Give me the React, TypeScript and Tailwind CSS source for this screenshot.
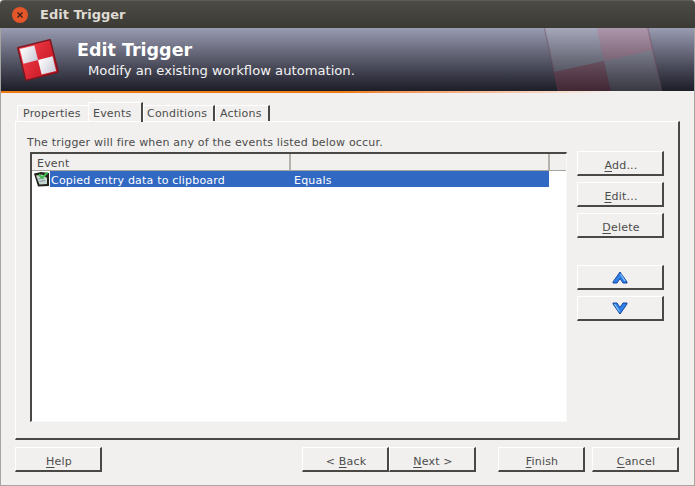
const font = "[font-family:'DejaVu_Sans',sans-serif]";

function Logo() {
  return (
    <svg width="44" height="44" viewBox="0 0 44 44" className="shrink-0">
      <defs>
        <linearGradient id="red" x1="0" y1="0" x2="1" y2="1">
          <stop offset="0" stopColor="#f4444f" />
          <stop offset="1" stopColor="#c20f1d" />
        </linearGradient>
        <linearGradient id="pale" x1="0" y1="0" x2="1" y2="1">
          <stop offset="0" stopColor="#ffffff" />
          <stop offset="1" stopColor="#c9c9d6" />
        </linearGradient>
      </defs>
      <g transform="translate(22 22) rotate(-14)">
        <rect x="-17.5" y="-17.5" width="35" height="35" rx="1" fill="#7c1620" />
        <rect x="-16" y="-16" width="32" height="32" fill="url(#red)" />
        <rect x="-15" y="-15" width="15" height="15" fill="url(#pale)" />
        <rect x="0" y="0" width="15" height="15" fill="url(#pale)" />
      </g>
    </svg>
  );
}

function Watermark() {
  return (
    <svg width="130" height="63" viewBox="0 0 130 63" className="absolute left-[540px] top-0">
      <g transform="translate(63 33) rotate(-12.5)">
        <rect x="-51" y="-60" width="51" height="60" fill="#ffffff" opacity="0.12" />
        <rect x="0" y="-60" width="50" height="60" fill="#e08a9a" opacity="0.28" />
        <rect x="-51" y="0" width="51" height="60" fill="#a84250" opacity="0.26" />
        <rect x="0" y="0" width="50" height="60" fill="#ffffff" opacity="0.12" />
        <path d="M-51 -60 V60 M50 -60 V60" stroke="#6d4255" strokeWidth="1.5" opacity="0.35" />
      </g>
    </svg>
  );
}

function Btn({ children, className = '' }: { children: React.ReactNode; className?: string }) {
  return (
    <div
      className={`flex h-[25px] w-[87px] shrink-0 items-center justify-center border-t border-l border-t-white border-l-white border-r-2 border-b-2 border-r-[#4a4844] border-b-[#4a4844] text-[11px] text-[#4c4c4c] ${className}`}
    >
      {children}
    </div>
  );
}

function Label({ mark, rest, before = '' }: { mark: string; rest: string; before?: string }) {
  return (
    <span className="whitespace-pre pt-[7px] pl-[2px] tracking-[0.2px]">
      {before}
      <span className="underline underline-offset-2">{mark}</span>
      {rest}
    </span>
  );
}

function Tab({
  label,
  className,
  active,
}: {
  label: string;
  className: string;
  active?: boolean;
}) {
  return (
    <div
      className={`flex items-center border-t border-l border-t-white border-l-white text-[11px] tracking-[0.2px] text-[#4c4c4c] ${className} ${
        active ? 'relative z-10 -mb-px h-[20px] pt-[3px]' : 'h-[16px] pt-[1px]'
      }`}
    >
      {label}
    </div>
  );
}

function Up() {
  return (
    <svg width="16" height="13" viewBox="0 0 16 13">
      <path d="M8 1 L15 11 L15 12 L11 12 L8 7.5 L5 12 L1 12 L1 11 Z" fill="#2f7fe8" stroke="#17479f" strokeWidth="1" strokeLinejoin="round" />
      <path d="M8.5 3 L13 10" fill="none" stroke="#8cc6fb" strokeWidth="1.2" />
    </svg>
  );
}

function Down() {
  return (
    <svg width="16" height="13" viewBox="0 0 16 13">
      <path d="M8 12 L15 2 L15 1 L11 1 L8 5.5 L5 1 L1 1 L1 2 Z" fill="#2f7fe8" stroke="#17479f" strokeWidth="1" strokeLinejoin="round" />
      <path d="M2.5 2 L7.5 9.5" fill="none" stroke="#8cc6fb" strokeWidth="1.2" />
    </svg>
  );
}

function EventIcon() {
  return (
    <svg width="17" height="16" viewBox="0 0 17 16" className="shrink-0">
      <path d="M1 2.5 L8 1 L16 2 L16 15 L5 15.5 Z" fill="#23231b" />
      <path d="M3 4.5 L9 3.5 L14 7 L14 13 L6.5 13.5 Z" fill="#c6d6cf" />
      <path d="M5.5 8 L11 7 M6.5 10.5 L12 9.5" stroke="#7f98a8" strokeWidth="1" />
      <path d="M6 3.5 L9 7 L14.5 1.5" fill="none" stroke="#41b94c" strokeWidth="2.2" />
    </svg>
  );
}

export default function App() {
  return (
    <div className={`flex h-[486px] w-[695px] flex-col overflow-hidden bg-[#f1f0ee] ${font}`}>
      <div className="flex h-[28px] shrink-0 items-center rounded-t-[4px] border-t border-t-[#5d5c55] bg-gradient-to-b from-[#4c4b45] to-[#3b3a34] pl-[12px]">
        <div className="flex h-[16px] w-[16px] items-center justify-center rounded-full bg-[#e2562a]">
          <svg width="8" height="8" viewBox="0 0 8 8">
            <path d="M1.5 1.5 L6.5 6.5 M6.5 1.5 L1.5 6.5" stroke="#3a2018" strokeWidth="1.4" />
          </svg>
        </div>
        <span className="ml-[12px] text-[13px] font-bold text-[#dfdbd2]">Edit Trigger</span>
      </div>

      <div className="flex min-h-0 flex-1 flex-col border-x border-b border-[#a5a4a0]">
        <div className="relative flex h-[63px] shrink-0 items-center overflow-hidden bg-gradient-to-b from-[#9a9cb2] to-[#1e1e29] pl-[15px]">
          <Watermark />
          <Logo />
          <div className="relative ml-[17px] flex flex-col">
            <span className="text-[17.5px] leading-[22px] font-bold text-white">Edit Trigger</span>
            <span className="ml-[11px] text-[13.15px] leading-[19px] text-[#f3f3f3]">
              Modify an existing workflow automation.
            </span>
          </div>
        </div>
        <div className="h-[2px] shrink-0 bg-gradient-to-r from-[#f07d12] from-50% to-[#f1f0ee] to-[88%]" />

        <div className="flex min-h-0 flex-1 flex-col px-[14px] pt-[9px] pb-[13px]">
          <div className="flex shrink-0 items-end pl-[2px]">
            <Tab label="Properties" className="w-[71px] pl-[5px]" />
            <Tab label="Events" className="w-[55px] pl-[4px] border-r-2 border-r-[#4a4844]" active />
            <Tab label="Conditions" className="w-[72px] pl-[3px] border-r-2 border-r-[#4a4844]" />
            <Tab label="Actions" className="w-[55px] pl-[4px] border-r-2 border-r-[#4a4844]" />
          </div>

          <div className="flex h-[319px] shrink-0 flex-col border-t border-l border-t-white border-l-white border-r-2 border-b-2 border-r-[#4a4844] border-b-[#4a4844] pl-[14px]">
            <div className="-ml-[3px] h-[30px] pt-[13px] text-[11px] leading-[16px] tracking-[0.2px] text-[#4c4c4c]">
              The trigger will fire when any of the events listed below occur.
            </div>
            <div className="flex gap-[10px]">
              <div className="flex h-[270px] w-[537px] flex-col border-t-2 border-l-2 border-t-[#4a4844] border-l-[#4a4844] border-r border-b border-r-[#f8f8f6] border-b-[#f8f8f6] bg-white">
                <div className="flex h-[17px] shrink-0 border-b border-[#a5a4a0] bg-[#f1f0ee] pt-[2px] text-[11px] leading-[15px] tracking-[0.2px] text-[#4c4c4c]">
                  <div className="-mt-[2px] w-[259px] border-r-2 border-[#b5b3ae] pt-[2px] pl-[5px]">Event</div>
                  <div className="-mt-[2px] w-[259px] border-r-2 border-[#b5b3ae]" />
                </div>
                <div className="flex h-[16px] items-center pl-[1px]">
                  <EventIcon />
                  <div className="flex h-[16px] w-[499px] items-center bg-[#3068c2] pt-[4px] text-[11px] tracking-[0.2px] text-white">
                    <span className="w-[244px] pl-px">Copied entry data to clipboard</span>
                    <span>Equals</span>
                  </div>
                </div>
              </div>

              <div className="-mt-[1px] flex flex-col">
                <Btn><Label mark="A" rest="dd..." /></Btn>
                <Btn className="mt-[6px]"><Label mark="E" rest="dit..." /></Btn>
                <Btn className="mt-[6px]"><Label mark="D" rest="elete" /></Btn>
                <Btn className="mt-[27px]"><Up /></Btn>
                <Btn className="mt-[6px]"><Down /></Btn>
              </div>
            </div>
          </div>

          <div className="mt-[7px] flex shrink-0">
            <Btn><Label mark="H" rest="elp" /></Btn>
            <Btn className="ml-[200px]"><Label before="< " mark="B" rest="ack" /></Btn>
            <Btn><Label mark="N" rest="ext >" /></Btn>
            <Btn className="ml-[22px]"><Label mark="F" rest="inish" /></Btn>
            <Btn className="ml-[7px]"><Label mark="C" rest="ancel" /></Btn>
          </div>
        </div>
      </div>
    </div>
  );
}
